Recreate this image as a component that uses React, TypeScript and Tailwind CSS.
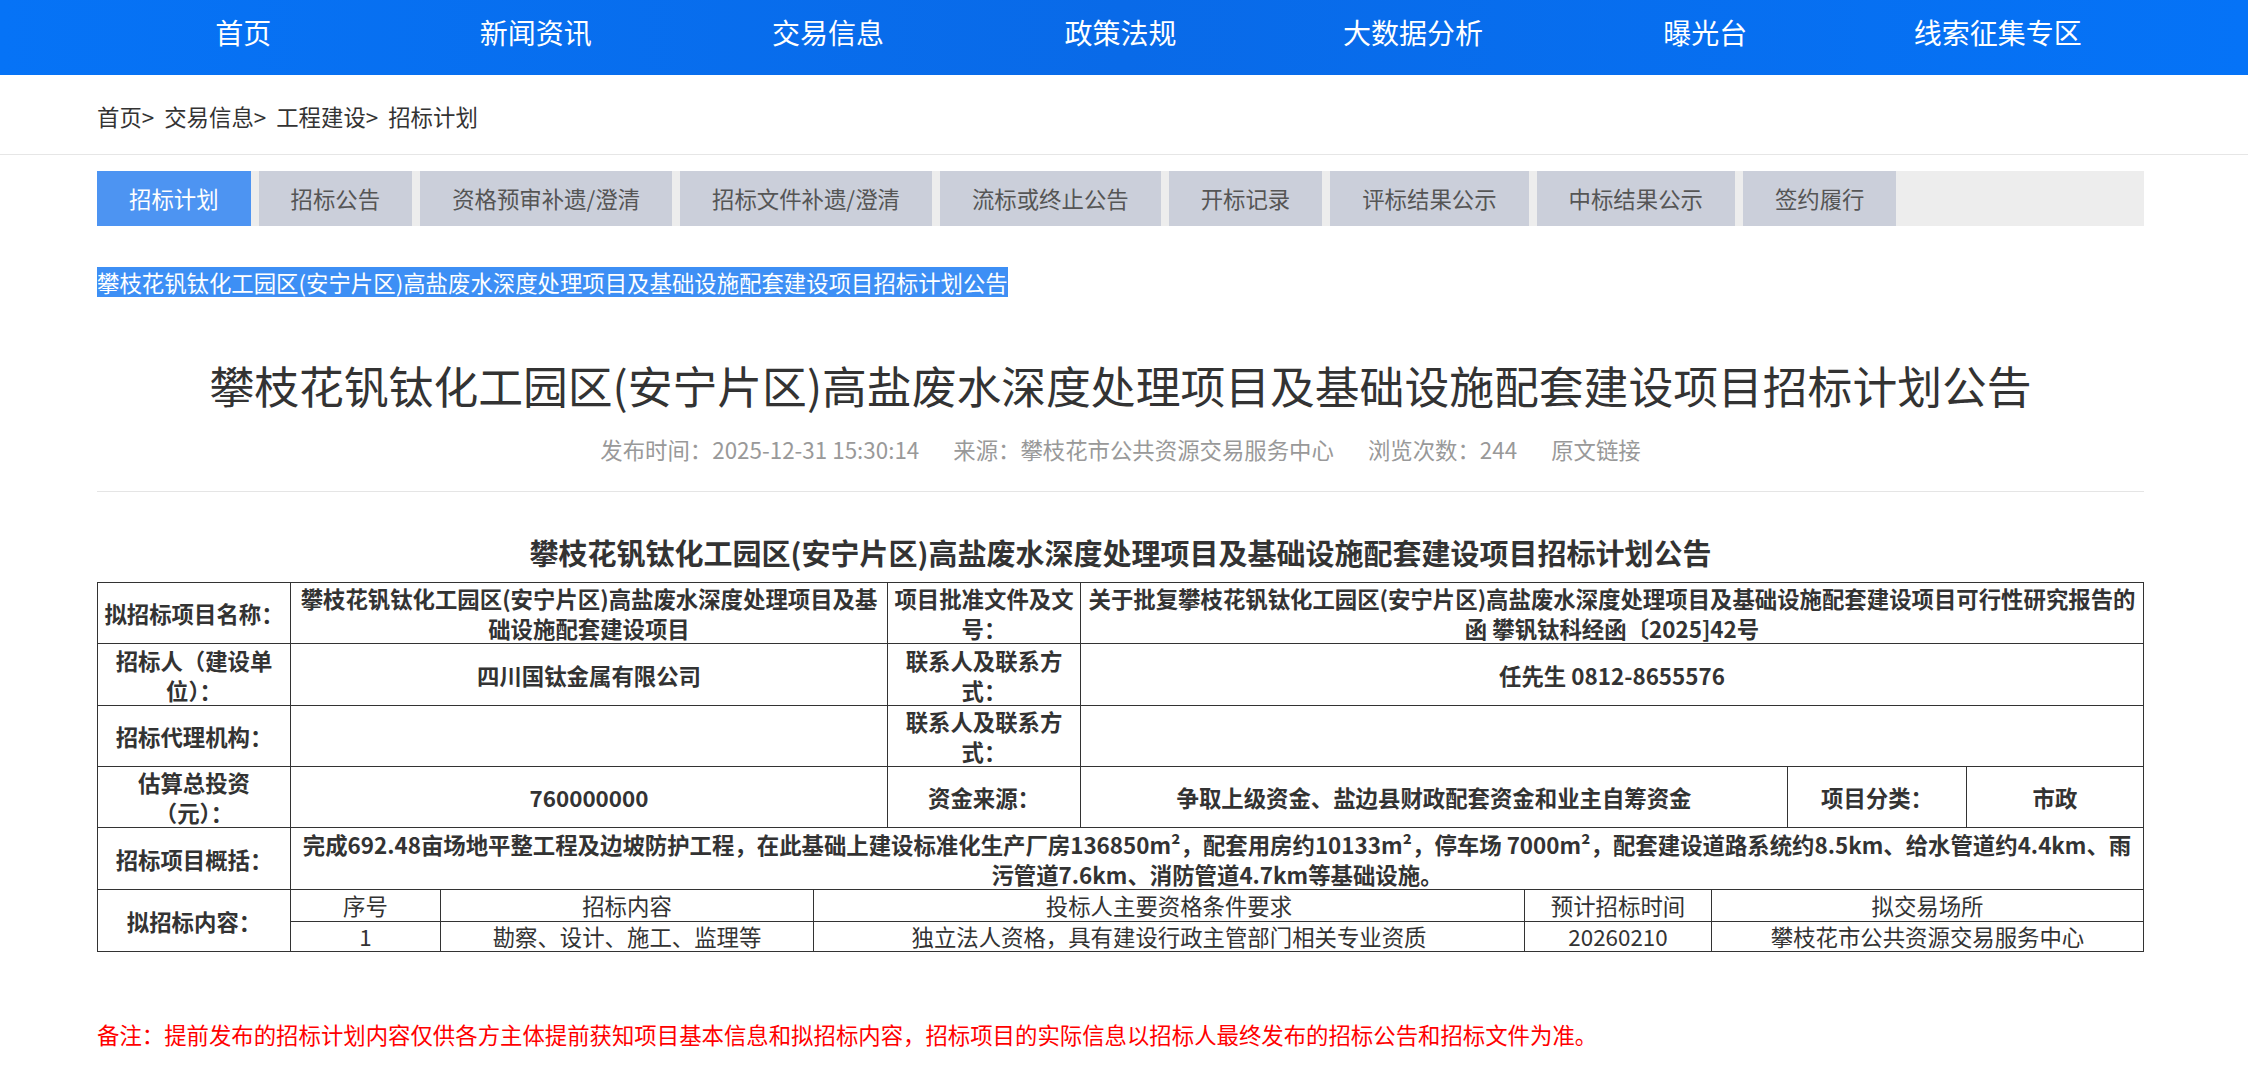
const navItems = ["首页", "新闻资讯", "交易信息", "政策法规", "大数据分析", "曝光台", "线索征集专区"];

const crumbs = ["首页", "交易信息", "工程建设", "招标计划"];

const tabs = [
  "招标计划",
  "招标公告",
  "资格预审补遗/澄清",
  "招标文件补遗/澄清",
  "流标或终止公告",
  "开标记录",
  "评标结果公示",
  "中标结果公示",
  "签约履行",
];

const title = "攀枝花钒钛化工园区(安宁片区)高盐废水深度处理项目及基础设施配套建设项目招标计划公告";

const cell = "border border-[#333] px-[4px] text-center align-middle";

export default function App() {
  return (
    <div className="min-h-[1076px] bg-white font-['Noto_Sans_CJK_SC',sans-serif] text-[#333]">
      <nav className="h-[75px] bg-[linear-gradient(90deg,#0673f6_0%,#096ae8_50%,#0573f7_100%)]">
        <ul className="ml-[97px] flex w-[2047px]">
          {navItems.map((item) => (
            <li key={item} className="flex-1 text-center text-[28px] leading-[64px] text-white">
              {item}
            </li>
          ))}
        </ul>
      </nav>

      <div className="border-b border-[#e6e6e6]">
        <div className="ml-[97px] flex h-[79px] items-center pt-[5px] text-[22.4px]">
          {crumbs.map((c, i) => (
            <span key={c} className={i > 0 ? "ml-[10px]" : ""}>
              {c}
              {i < crumbs.length - 1 ? ">" : ""}
            </span>
          ))}
        </div>
      </div>

      <main className="ml-[97px] w-[2047px]">
        <div className="mt-[16px] flex h-[55px] gap-[8px] bg-[#ededed]">
          {tabs.map((tab, i) => (
            <div
              key={tab}
              className={
                i === 0
                  ? "bg-[#4d94f2] px-[32px] text-[22.4px] leading-[55px] text-white"
                  : "bg-[#cbcfda] px-[32px] text-[22.4px] leading-[55px] text-[#555]"
              }
            >
              {tab}
            </div>
          ))}
        </div>

        <div className="mt-[41px] h-[30px]">
          <span className="inline-block bg-[#3d8ff5] text-[22.4px] leading-[30px] text-white">{title}</span>
        </div>

        <h1 className="mt-[58px] text-center text-[44.8px] font-normal leading-[60px] text-[#333]">{title}</h1>

        <div className="mt-[19px] flex justify-center gap-[34px] text-[22.4px] leading-[30px] text-[#999]">
          <span>发布时间：2025-12-31 15:30:14</span>
          <span>来源：攀枝花市公共资源交易服务中心</span>
          <span>浏览次数：244</span>
          <span>原文链接</span>
        </div>

        <div className="mt-[27px] border-t border-[#e5e5e5]" />

        <h2 className="mt-[40px] text-center text-[29px] font-bold leading-[40px] text-[#333]">{title}</h2>

        <table className="mt-[10px] w-full table-fixed border-collapse text-[22.4px] font-bold leading-[30px]">
          <colgroup>
            <col className="w-[193px]" />
            <col className="w-[597px]" />
            <col className="w-[193px]" />
            <col className="w-[707px]" />
            <col className="w-[179px]" />
            <col />
          </colgroup>
          <tbody>
            <tr className="h-[60px]">
              <td className={cell}>拟招标项目名称：</td>
              <td className={cell}>
                攀枝花钒钛化工园区(安宁片区)高盐废水深度处理项目及基
                <br />
                础设施配套建设项目
              </td>
              <td className={cell}>
                项目批准文件及文
                <br />
                号：
              </td>
              <td className={cell} colSpan={3}>
                关于批复攀枝花钒钛化工园区(安宁片区)高盐废水深度处理项目及基础设施配套建设项目可行性研究报告的
                <br />
                函 攀钒钛科经函〔2025]42号
              </td>
            </tr>
            <tr className="h-[62px]">
              <td className={cell}>
                招标人（建设单
                <br />
                位）：
              </td>
              <td className={cell}>四川国钛金属有限公司</td>
              <td className={cell}>
                联系人及联系方
                <br />
                式：
              </td>
              <td className={cell} colSpan={3}>
                任先生 0812-8655576
              </td>
            </tr>
            <tr className="h-[60px]">
              <td className={cell}>招标代理机构：</td>
              <td className={cell}></td>
              <td className={cell}>
                联系人及联系方
                <br />
                式：
              </td>
              <td className={cell} colSpan={3}></td>
            </tr>
            <tr className="h-[61px]">
              <td className={cell}>
                估算总投资
                <br />
                （元）：
              </td>
              <td className={cell}>760000000</td>
              <td className={cell}>资金来源：</td>
              <td className={cell}>争取上级资金、盐边县财政配套资金和业主自筹资金</td>
              <td className={cell}>项目分类：</td>
              <td className={cell}>市政</td>
            </tr>
            <tr className="h-[62px]">
              <td className={cell}>招标项目概括：</td>
              <td className={cell} colSpan={5}>
                完成692.48亩场地平整工程及边坡防护工程，在此基础上建设标准化生产厂房136850m²，配套用房约10133m²，停车场 7000m²，配套建设道路系统约8.5km、给水管道约4.4km、雨
                <br />
                污管道7.6km、消防管道4.7km等基础设施。
              </td>
            </tr>
            <tr className="h-[61px]">
              <td className={cell}>拟招标内容：</td>
              <td className="border border-[#333] p-0 align-top" colSpan={5}>
                <div className="grid grid-cols-[149px_373px_711px_187px_1fr] text-center font-normal">
                  <div className="h-[31px] leading-[31px]">序号</div>
                  <div className="h-[31px] border-l border-[#333] leading-[31px]">招标内容</div>
                  <div className="h-[31px] border-l border-[#333] leading-[31px]">投标人主要资格条件要求</div>
                  <div className="h-[31px] border-l border-[#333] leading-[31px]">预计招标时间</div>
                  <div className="h-[31px] border-l border-[#333] leading-[31px]">拟交易场所</div>
                  <div className="h-[30px] border-t border-[#333] leading-[29px]">1</div>
                  <div className="h-[30px] border-l border-t border-[#333] leading-[29px]">勘察、设计、施工、监理等</div>
                  <div className="h-[30px] border-l border-t border-[#333] leading-[29px]">
                    独立法人资格，具有建设行政主管部门相关专业资质
                  </div>
                  <div className="h-[30px] border-l border-t border-[#333] leading-[29px]">20260210</div>
                  <div className="h-[30px] border-l border-t border-[#333] leading-[29px]">攀枝花市公共资源交易服务中心</div>
                </div>
              </td>
            </tr>
          </tbody>
        </table>

        <p className="mt-[67px] text-[22.4px] leading-[30px] text-[#ff0000]">
          备注：提前发布的招标计划内容仅供各方主体提前获知项目基本信息和拟招标内容，招标项目的实际信息以招标人最终发布的招标公告和招标文件为准。
        </p>
      </main>
    </div>
  );
}
